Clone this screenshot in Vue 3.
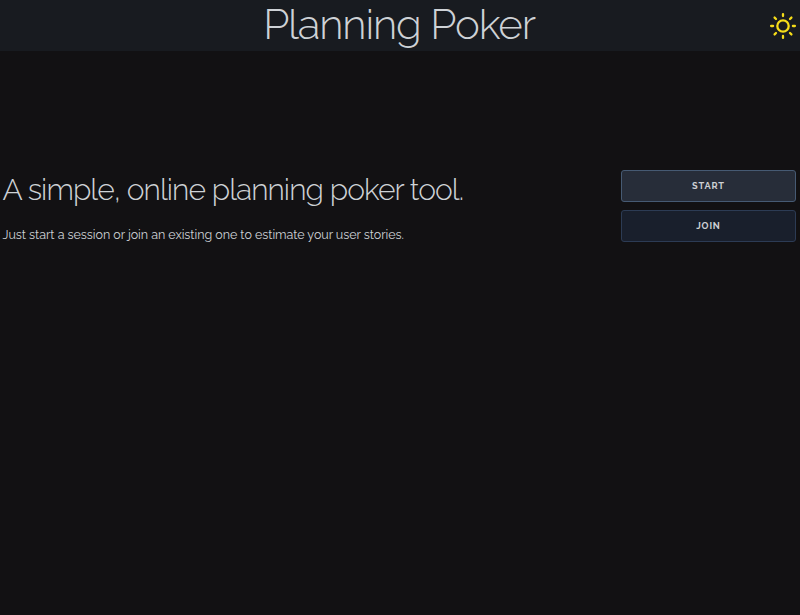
<script setup>
const rays = [0, 45, 90, 135, 180, 225, 270, 315]
</script>

<template>
  <div class="page">
    <header class="bar">
      <span class="side"></span>
      <h1>Planning Poker</h1>
      <button class="theme" aria-label="Theme">
        <svg width="28" height="28" viewBox="-14 -14 28 28">
          <circle r="5.7" />
          <path v-for="a in rays" :key="a" d="M0 -11.9V-9.9" :transform="`rotate(${a})`" />
        </svg>
      </button>
    </header>
    <main class="content">
      <section class="intro">
        <h2>A simple, online planning poker tool.</h2>
        <p>Just start a session or join an existing one to estimate your user stories.</p>
      </section>
      <nav class="actions">
        <button class="btn start">Start</button>
        <button class="btn join">Join</button>
      </nav>
    </main>
  </div>
</template>

<style>
body { background: #121113; }
</style>

<style scoped>
.page {
  min-height: 615px;
  background: #121113;
  color: #ced2d6;
  font-family: Raleway, Lato, "Open Sans", sans-serif;
}
.bar {
  height: 51px;
  display: grid;
  grid-template-columns: 1fr auto 1fr;
  background: #181b20;
}
h1, h2 { margin: 0; font-weight: 300; white-space: nowrap; }
h1 {
  padding-right: 2px;
  font-size: 42px;
  line-height: 50px;
  letter-spacing: -1.12px;
}
.theme {
  justify-self: end;
  width: 28px;
  height: 28px;
  margin: 12px 3px 0 0;
  padding: 0;
  border: 0;
  background: none;
}
.theme svg {
  display: block;
  fill: none;
  stroke: #f5dc19;
  stroke-width: 2.3;
  stroke-linecap: round;
}
.content {
  display: flex;
  justify-content: space-between;
  padding: 119px 4px 0 2.5px;
}
h2 {
  font-size: 30px;
  line-height: 40px;
  letter-spacing: -0.93px;
}
p {
  margin: 15px 0 0;
  font-size: 12.5px;
  line-height: 20px;
  letter-spacing: -0.04px;
  white-space: nowrap;
}
.actions {
  display: flex;
  flex-direction: column;
  gap: 8px;
  width: 175px;
}
.btn {
  box-sizing: border-box;
  height: 32px;
  padding: 0;
  border: 1px solid;
  border-radius: 3px;
  color: #ced0d4;
  font: 700 9.2px/30px Raleway, "Open Sans", sans-serif;
  letter-spacing: 0.83px;
  text-transform: uppercase;
}
.start { background: #272d39; border-color: #465a73; }
.join { background: #191f2c; border-color: #2c3b54; }
</style>
